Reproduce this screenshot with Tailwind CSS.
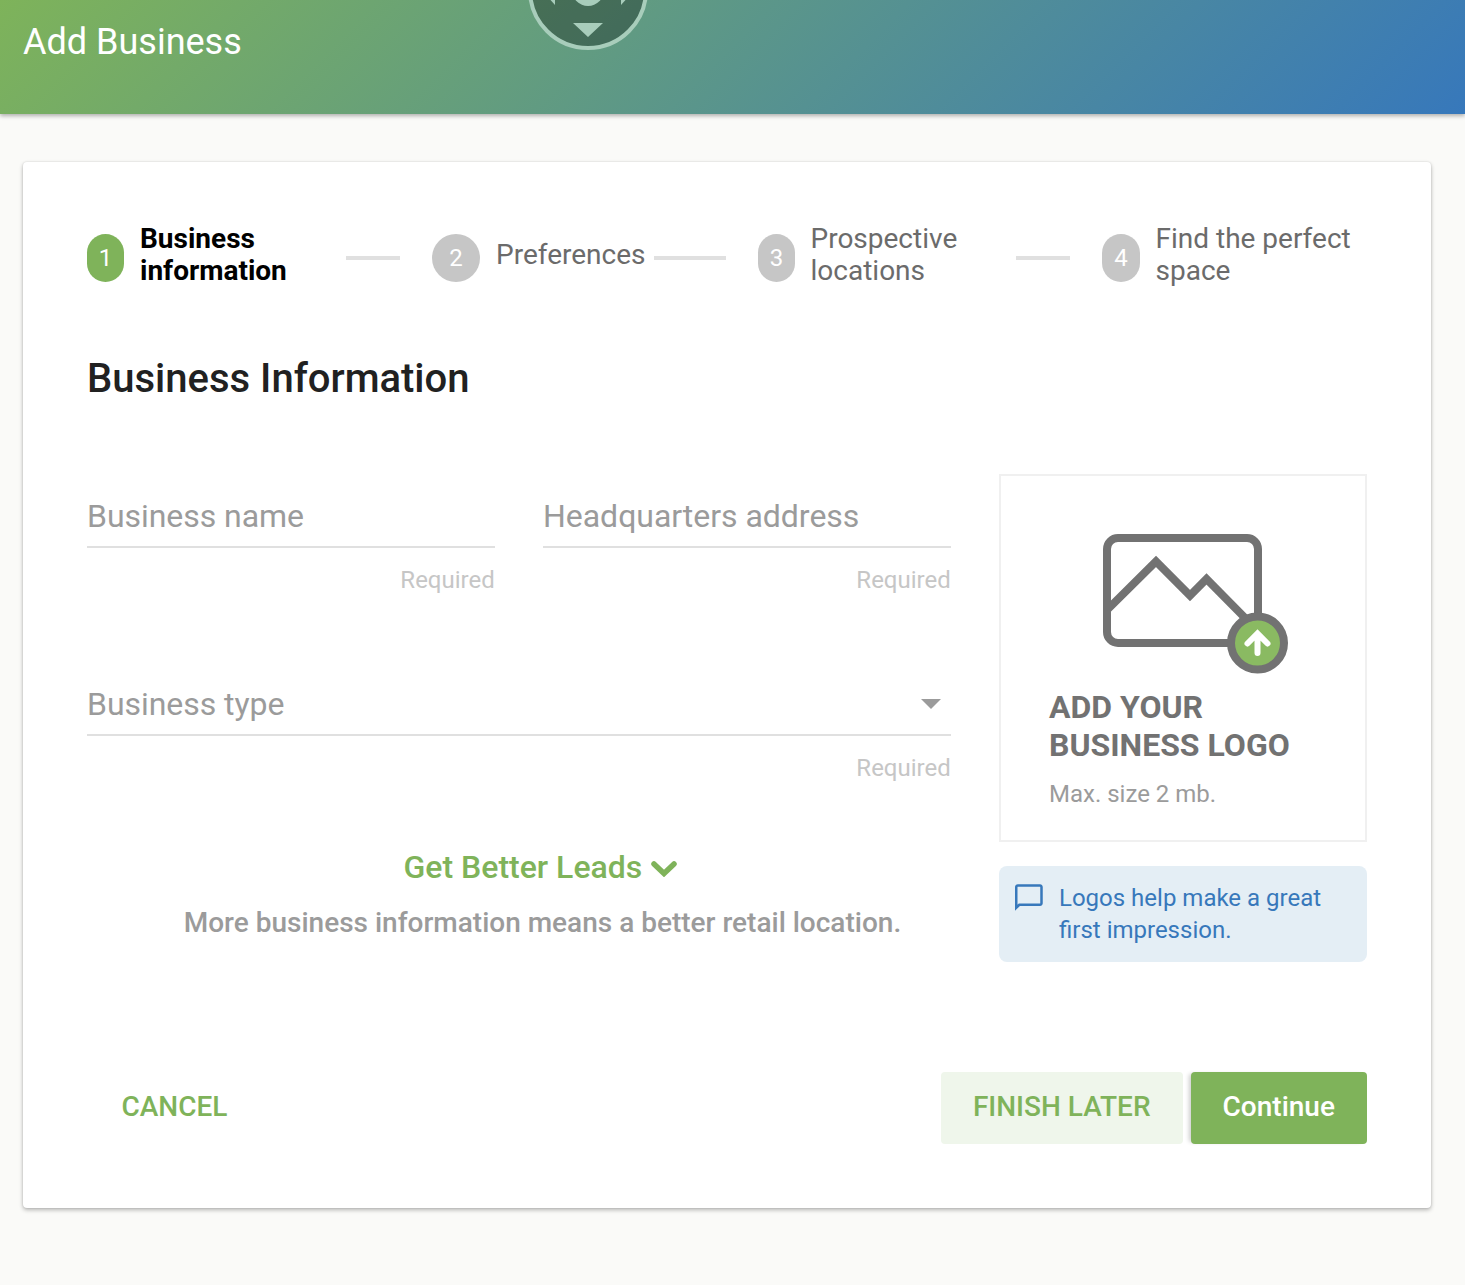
<!DOCTYPE html>
<html lang="en">
<head>
<meta charset="utf-8">
<title>Add Business</title>
<script src="https://cdn.jsdelivr.net/npm/@tailwindcss/browser@4"></script>
</head>
<body class="bg-[#fafaf8] font-['Roboto',sans-serif] h-[1285px] overflow-hidden">
<header class="relative h-[114px] overflow-visible bg-[linear-gradient(135deg,#7eb35a,#3778bb)] shadow-[0_2px_4px_rgba(0,0,0,0.3)] pl-[23px] pt-[18px]">
  <h1 class="text-[36px] leading-[48px] text-white">Add Business</h1>
  <svg class="absolute left-[528px] top-0" width="120" height="50" viewBox="0 0 120 50">
    <circle cx="60" cy="-10" r="58" fill="#000" fill-opacity=".3"/>
    <circle cx="60" cy="-10" r="58" fill="none" stroke="#a8cdbb" stroke-width="4"/>
    <path d="M45 23h30L60 37zM22.500 0H27v5zM97.500 0H93v5z" fill="#a8cdbb"/>
    <circle cx="60" cy="-10" r="16" fill="#a8cdbb"/>
  </svg>
</header>
<main class="mt-12 ml-[23px] w-[1408px] h-[1046px] bg-white rounded px-16 pt-[60px] shadow-[0_2px_4px_rgba(0,0,0,0.28),0_0_2px_rgba(0,0,0,0.12)]">
  <ol class="flex items-center h-[72px] text-[28px] leading-8 text-[#6b6b6b]">
    <li class="flex items-center w-[259px] shrink-0">
      <span class="w-[37px] h-12 rounded-full bg-[#7fb35a] text-white text-2xl flex items-center justify-center">1</span>
      <span class="ml-4 -mt-1.5 font-bold text-black">Business<br>information</span>
    </li>
    <li class="w-[54px] h-1 bg-[#e0e0e0] shrink-0"></li>
    <li class="flex items-center ml-8 w-[222px] shrink-0">
      <span class="w-12 h-12 rounded-full bg-[#c6c6c6] text-white text-2xl flex items-center justify-center">2</span>
      <span class="ml-4 -mt-1.5">Preferences</span>
    </li>
    <li class="w-[72px] h-1 bg-[#e0e0e0] shrink-0"></li>
    <li class="flex items-center ml-8 w-[258px] shrink-0">
      <span class="w-[37px] h-12 rounded-full bg-[#c6c6c6] text-white text-2xl flex items-center justify-center">3</span>
      <span class="ml-[15.5px] -mt-1.5">Prospective<br>locations</span>
    </li>
    <li class="w-[54px] h-1 bg-[#e0e0e0] shrink-0"></li>
    <li class="flex items-center ml-8 shrink-0">
      <span class="w-[38px] h-12 rounded-full bg-[#c6c6c6] text-white text-2xl flex items-center justify-center">4</span>
      <span class="ml-[15.5px] -mt-1.5 whitespace-nowrap">Find the perfect<br>space</span>
    </li>
  </ol>
  <h2 class="mt-[61px] text-[40px] leading-[48px] font-medium text-[#212121]">Business Information</h2>
  <div class="mt-[71px] flex gap-12">
    <section class="w-[864px]">
      <div class="flex gap-12">
        <div class="w-[408px]">
          <div class="h-[74px] pt-[22px] border-b-2 border-[#e0e0e0] text-[32px] leading-10 tracking-[-0.05px] text-[#9b9b9b]">Business name</div>
          <div class="mt-4 pr-[0.25px] text-right text-2xl leading-8 text-[#c6c6c6]">Required</div>
        </div>
        <div class="w-[408px]">
          <div class="h-[74px] pt-[22px] border-b-2 border-[#e0e0e0] text-[32px] leading-10 tracking-[-0.03px] text-[#9b9b9b]">Headquarters address</div>
          <div class="mt-4 pr-[0.25px] text-right text-2xl leading-8 text-[#c6c6c6]">Required</div>
        </div>
      </div>
      <div class="mt-[66px] h-[74px] pt-[22px] pr-2.5 flex justify-between border-b-2 border-[#e0e0e0] text-[32px] leading-10 tracking-[-0.05px] text-[#9b9b9b]">
        <span>Business type</span>
        <svg class="mt-[15px]" width="20" height="10" viewBox="0 0 20 10"><path d="M0 0h20L10 10z" fill="#9b9b9b"/></svg>
      </div>
      <div class="mt-4 pr-[0.25px] text-right text-2xl leading-8 text-[#c6c6c6]">Required</div>
      <div class="mt-[63px] pl-[316.5px] flex items-center h-10 text-[32px] leading-10 font-medium text-[#7fb35a]">
        <span class="w-[247.5px] whitespace-nowrap">Get Better Leads</span>
        <svg class="mt-1" width="26" height="16" viewBox="0 0 26 16"><path d="M3 3L13 12.500L23 3" fill="none" stroke="#7fb35a" stroke-width="5.500" stroke-linecap="round"/></svg>
      </div>
      <p class="mt-5 pl-[96.75px] text-[28px] leading-8 font-medium text-[#9b9b9b] whitespace-nowrap">More business information means a better retail location.</p>
    </section>
    <aside class="w-[368px]">
      <div class="h-[368px] border-2 border-[#f0f0f0] pl-12">
        <svg class="ml-[54px] mt-[58px]" width="186" height="140" viewBox="0 0 186 140" fill="none">
          <rect x="4" y="4" width="151" height="105" rx="11" stroke="#727272" stroke-width="8"/>
          <path d="M4 76L53 27.500L87 61.500L103.500 45L150 92" stroke="#727272" stroke-width="8"/>
          <circle cx="154.500" cy="109" r="26.500" fill="#8aba62" stroke="#727272" stroke-width="8"/>
          <path d="M154.500 119V100M144.500 109.500L154.500 99.500L164.500 109.500" stroke="#fff" stroke-width="6" stroke-linecap="round"/>
        </svg>
        <h3 class="mt-[14px] text-[32px] leading-[38px] font-bold text-[#727272]">ADD YOUR<br>BUSINESS LOGO</h3>
        <p class="mt-[14px] text-2xl leading-8 text-[#9b9b9b]">Max. size 2 mb.</p>
      </div>
      <div class="mt-6 h-24 rounded-lg bg-[#e4eef5] pl-4 pt-4 flex text-2xl leading-8 text-[#3778bb]">
        <svg class="mt-0.5 shrink-0" width="28" height="28" viewBox="0 0 28 28"><path d="M1.250 23.800V3A1.500 1.500 0 0 1 2.750 1.500H25A1.500 1.500 0 0 1 26.500 3V19.250A1.500 1.500 0 0 1 25 20.750H4.300Z" fill="none" stroke="#3778bb" stroke-width="2.500"/></svg>
        <p class="ml-4 whitespace-nowrap">Logos help make a great<br>first impression.</p>
      </div>
    </aside>
  </div>
  <footer class="mt-[110px] flex h-[72px] text-[28px] leading-[68px] font-medium">
    <button class="pl-[34.5px] text-[#7fb35a] mr-auto h-[70px]">CANCEL</button>
    <button class="w-[242px] h-[72px] pr-[0.5px] pb-0.5 rounded bg-[#eff6eb] text-[#7fb35a]">FINISH LATER</button>
    <button class="ml-2 w-[176px] h-[72px] pr-[0.5px] pb-0.5 rounded bg-[#7fb35a] text-white shadow-[-4px_0_4px_-2px_rgba(0,0,0,0.2)]">Continue</button>
  </footer>
</main>
</body>
</html>
